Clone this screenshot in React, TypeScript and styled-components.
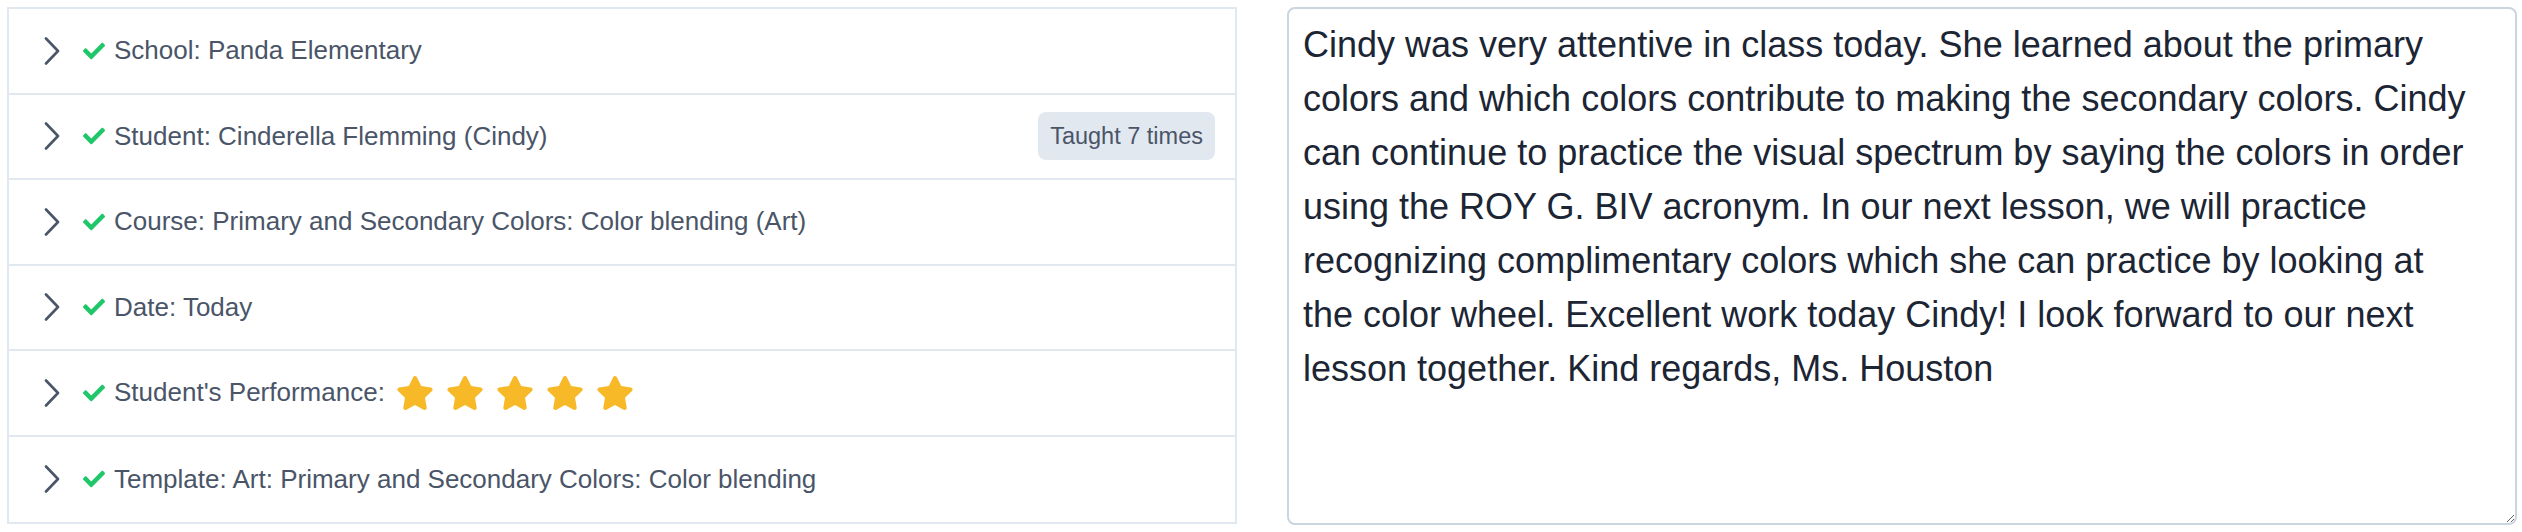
import React from "react";
import styled, { createGlobalStyle } from "styled-components";
import { FaCheck, FaStar } from "react-icons/fa";

const GlobalStyle = createGlobalStyle`
  html, body {
    margin: 0;
    padding: 0;
    background: #ffffff;
    font-family: "Liberation Sans", Arial, Helvetica, sans-serif;
  }
  * { box-sizing: border-box; }
`;

const Page = styled.div`
  display: grid;
  grid-template-columns: 1fr 1fr;
  column-gap: 50px;
  padding: 7px 5px 7px 7px;
  align-items: start;
`;

const Panel = styled.div`
  border: 2px solid #e2e8f0;
  display: flex;
  flex-direction: column;
`;

const Row = styled.div`
  display: flex;
  align-items: center;
  height: 85.5px;
  padding: 0 20px 0 35px;
  border-bottom: 2px solid #e2e8f0;
  &:last-child {
    border-bottom: none;
  }
`;

const Chevron = styled.svg`
  width: 16px;
  height: 28px;
  flex: none;
  margin-right: 23px;
`;

const Check = styled(FaCheck)`
  flex: none;
  color: #1fc76a;
  width: 22px;
  height: 22px;
  margin-right: 9px;
`;

const Label = styled.span`
  font-size: 26px;
  color: #4a5568;
  white-space: nowrap;
`;

const Stars = styled.span`
  display: inline-flex;
  align-items: center;
  gap: 12px;
  margin-left: 11px;
`;

const Star = styled(FaStar)`
  color: #f7b928;
  width: 38px;
  height: 38px;
`;

const Badge = styled.span`
  margin-left: auto;
  background: #e2e8f0;
  color: #4a5568;
  font-size: 23.5px;
  border-radius: 8px;
  padding: 11px 12px;
  line-height: 26px;
  white-space: nowrap;
`;

const Notes = styled.textarea`
  display: block;
  width: 100%;
  height: 518px;
  border: 2px solid #cbd5e0;
  border-radius: 8px;
  padding: 9px 41px 9px 14px;
  font-family: "Liberation Sans", Arial, Helvetica, sans-serif;
  font-size: 36px;
  line-height: 54px;
  color: #1c2534;
  background: #ffffff;
  resize: vertical;
  outline: none;
`;

const ChevronIcon = () => (
  <Chevron viewBox="0 0 16 28" fill="none">
    <path
      d="M2 1.5 L14 14 L2 26.5"
      stroke="#4a5568"
      strokeWidth="2.6"
      strokeLinecap="round"
      strokeLinejoin="round"
    />
  </Chevron>
);

const items = [
  { label: "School: Panda Elementary" },
  { label: "Student: Cinderella Flemming (Cindy)", badge: "Taught 7 times" },
  { label: "Course: Primary and Secondary Colors: Color blending (Art)" },
  { label: "Date: Today" },
  { label: "Student's Performance:", stars: 5 },
  { label: "Template: Art: Primary and Secondary Colors: Color blending" },
];

const noteText =
  "Cindy was very attentive in class today. She learned about the primary colors and which colors contribute to making the secondary colors. Cindy can continue to practice the visual spectrum by saying the colors in order using the ROY G. BIV acronym. In our next lesson, we will practice recognizing complimentary colors which she can practice by looking at the color wheel. Excellent work today Cindy! I look forward to our next lesson together. Kind regards, Ms. Houston";

export default function App() {
  return (
    <>
      <GlobalStyle />
      <Page>
        <Panel>
          {items.map((it) => (
            <Row key={it.label}>
              <ChevronIcon />
              <Check />
              <Label>{it.label}</Label>
              {it.stars ? (
                <Stars>
                  {Array.from({ length: it.stars }).map((_, i) => (
                    <Star key={i} />
                  ))}
                </Stars>
              ) : null}
              {it.badge ? <Badge>{it.badge}</Badge> : null}
            </Row>
          ))}
        </Panel>
        <Notes defaultValue={noteText} spellCheck={false} />
      </Page>
    </>
  );
}
